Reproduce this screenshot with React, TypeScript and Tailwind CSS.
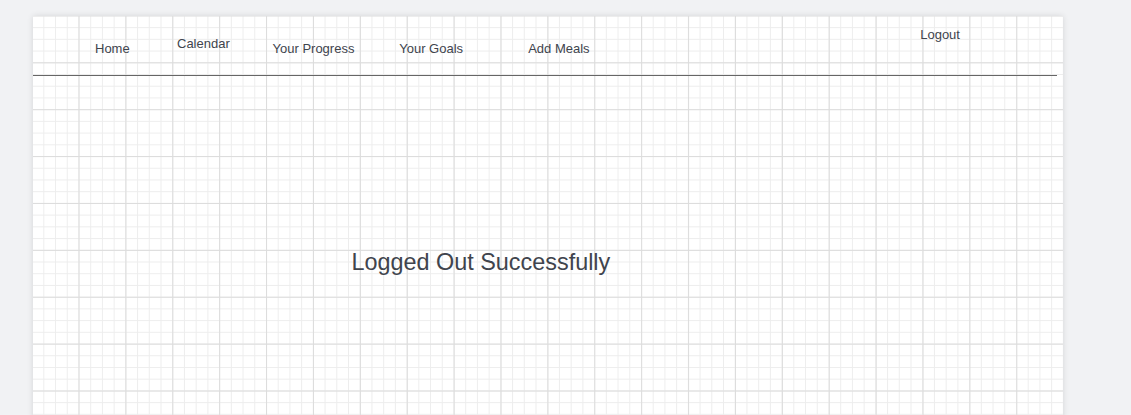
export default function App() {
  const navItems = [
    { label: "Home", box: "w-[82px] pt-[25px]" },
    { label: "Calendar", box: "w-[95.5px] pt-[20px]" },
    { label: "Your Progress", box: "w-[126.7px] pt-[25px]" },
    { label: "Your Goals", box: "w-[129px] pt-[25px]" },
    { label: "Add Meals", box: "w-[392px] pt-[25px]" },
    { label: "Logout", box: "pt-[11px]" },
  ];

  return (
    <div className="h-[415px] overflow-hidden bg-[#f1f2f4] font-['Liberation_Sans',Arial,sans-serif] text-[#40444d]">
      <div className="ml-[33px] mt-[16px] h-[420px] w-[1030px] bg-white bg-[linear-gradient(to_right,#dcdcdc_1px,transparent_1px),linear-gradient(to_bottom,#dcdcdc_1px,transparent_1px),linear-gradient(to_right,#ededed_1px,transparent_1px),linear-gradient(to_bottom,#ededed_1px,transparent_1px)] bg-[length:46.9px_46.9px,46.9px_46.9px,11.725px_11.725px,11.725px_11.725px] bg-[position:-1.4px_-0.6px] shadow-[0_0_6px_rgba(0,0,0,0.12)]">
        {/* Nav */}
        <nav className="flex h-[59px] pl-[62px] text-[13px] leading-[15px]">
          {navItems.map((item) => (
            <div key={item.label} className={item.box}>
              {item.label}
            </div>
          ))}
        </nav>
        <div className="h-px w-[1024px] bg-[#666]" />

        <div className="pl-[318.5px] pt-[175px] text-[23.4px] leading-[23px]">
          Logged Out Successfully
        </div>
      </div>
    </div>
  );
}
